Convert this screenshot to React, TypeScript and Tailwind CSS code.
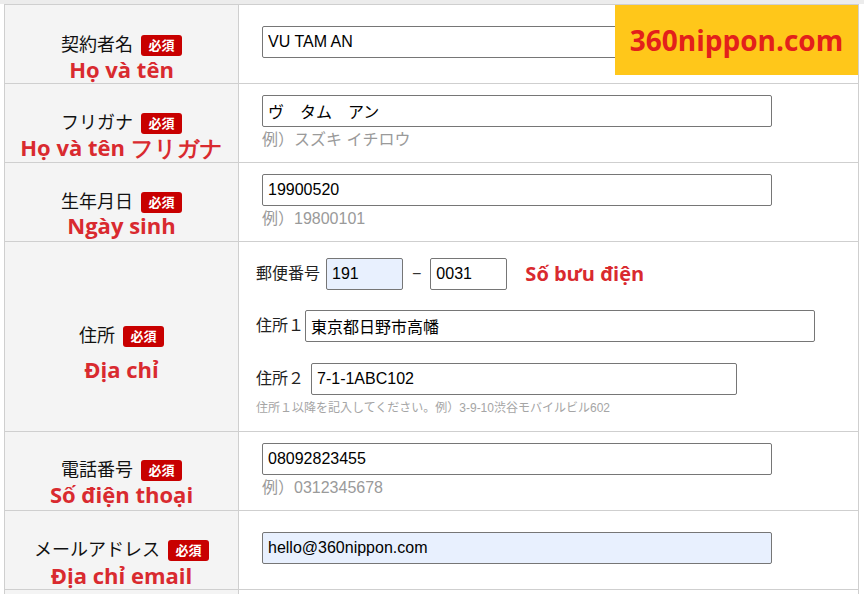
import type { ReactNode } from "react";

const jp = "font-['Liberation_Sans','Noto_Sans_CJK_JP',sans-serif]";
const vn = "font-['Open_Sans','Noto_Sans',sans-serif]";

function Badge() {
  return (
    <span
      className={`ml-[8px] inline-flex h-[21px] w-[41px] items-center justify-center rounded-[3px] bg-[#c80000] text-[13px] font-bold leading-none text-white ${jp}`}
    >
      必須
    </span>
  );
}

function Label({ jpText, vnText, pt, gap }: { jpText: string; vnText: string; pt: string; gap: string }) {
  return (
    <div className={`flex w-[234px] shrink-0 flex-col items-center border-r border-[#cfcfcf] bg-[#f4f4f4] ${pt}`}>
      <div className="flex h-[22px] items-center">
        <span className={`text-[18px] text-[#111] ${jp}`}>{jpText}</span>
        <Badge />
      </div>
      <div className={`text-[22px] font-bold leading-[24px] text-[#d92a2f] ${vn} ${gap}`}>{vnText}</div>
    </div>
  );
}

function Field({ value, w = "w-[510px]", filled = false }: { value: string; w?: string; filled?: boolean }) {
  return (
    <input
      readOnly
      value={value}
      className={`h-[32px] ${w} rounded-[2px] border border-[#767676] px-[5px] text-[16px] text-black outline-none ${jp} ${
        filled ? "bg-[#e8f0fe]" : "bg-white"
      }`}
    />
  );
}

function Hint({ children }: { children: ReactNode }) {
  return <div className={`mt-[1px] text-[16px] leading-[24px] text-[#9a9a9a] ${jp}`}>{children}</div>;
}

function Row({ label, children, h, last = false }: { label: ReactNode; children: ReactNode; h: string; last?: boolean }) {
  return (
    <div className={`flex ${h} ${last ? "" : "border-b border-[#cfcfcf]"}`}>
      {label}
      <div className="flex-1 bg-white">{children}</div>
    </div>
  );
}

export default function App() {
  return (
    <div className="relative h-[594px] w-[864px] overflow-hidden bg-white">
      <div className="h-[4px] w-full bg-[#ececec]" />
      <div className="ml-[4px] w-[855px] border-x border-t border-[#cfcfcf]">
        <Row h="h-[79px]" label={<Label jpText="契約者名" vnText="Họ và tên" pt="pt-[29px]" gap="mt-[1px]" />}>
          <div className="pl-[23px] pt-[21px]">
            <Field value="VU TAM AN" />
          </div>
        </Row>
        <Row h="h-[79px]" label={<Label jpText="フリガナ" vnText="Họ và tên フリガナ" pt="pt-[28px]" gap="mt-[1px]" />}>
          <div className="pl-[23px] pt-[11px]">
            <Field value="ヴ　タム　アン" />
            <Hint>例）スズキ イチロウ</Hint>
          </div>
        </Row>
        <Row h="h-[79px]" label={<Label jpText="生年月日" vnText="Ngày sinh" pt="pt-[28px]" gap="mt-[0px]" />}>
          <div className="pl-[23px] pt-[11px]">
            <Field value="19900520" />
            <Hint>例）19800101</Hint>
          </div>
        </Row>
        <Row h="h-[190px]" label={<Label jpText="住所" vnText="Địa chỉ" pt="pt-[83px]" gap="mt-[10px]" />}>
          <div className={`pl-[17px] pt-[16px] text-[16px] text-[#222] ${jp}`}>
            <div className="flex items-center">
              <span>郵便番号</span>
              <span className="ml-[6px]">
                <Field value="191" w="w-[77px]" filled />
              </span>
              <span className="mx-[9px] text-[#333]">−</span>
              <Field value="0031" w="w-[77px]" />
              <span className={`ml-[18px] text-[20px] font-bold text-[#d92a2f] ${vn}`}>Số bưu điện</span>
            </div>
            <div className="mt-[20px] flex items-center">
              <span>住所１</span>
              <span className="ml-[1px]">
                <Field value="東京都日野市高幡" />
              </span>
            </div>
            <div className="mt-[21px] flex items-center">
              <span>住所２</span>
              <span className="ml-[7px]">
                <Field value="7-1-1ABC102" w="w-[426px]" />
              </span>
            </div>
            <div className="mt-[5px] text-[12px] leading-[16px] text-[#a5a5a5]">
              住所１以降を記入してください。例）3-9-10渋谷モバイルビル602
            </div>
          </div>
        </Row>
        <Row h="h-[79px]" label={<Label jpText="電話番号" vnText="Số điện thoại" pt="pt-[27px]" gap="mt-[1px]" />}>
          <div className="pl-[23px] pt-[11px]">
            <Field value="08092823455" />
            <Hint>例）0312345678</Hint>
          </div>
        </Row>
        <Row h="h-[79px]" label={<Label jpText="メールアドレス" vnText="Địa chỉ email" pt="pt-[28px]" gap="mt-[2px]" />}>
          <div className="pl-[23px] pt-[21px]">
            <Field value="hello@360nippon.com" filled />
          </div>
        </Row>
        <Row h="h-[10px]" last label={<div className="w-[234px] shrink-0 border-r border-[#cfcfcf] bg-[#f4f4f4]" />}>
          <div />
        </Row>
      </div>
      <div
        className={`absolute left-[615px] top-[5px] flex h-[70px] w-[243px] items-center justify-center bg-[#ffc71a] text-[28px] font-bold text-[#e3201b] ${vn}`}
      >
        360nippon.com
      </div>
    </div>
  );
}
